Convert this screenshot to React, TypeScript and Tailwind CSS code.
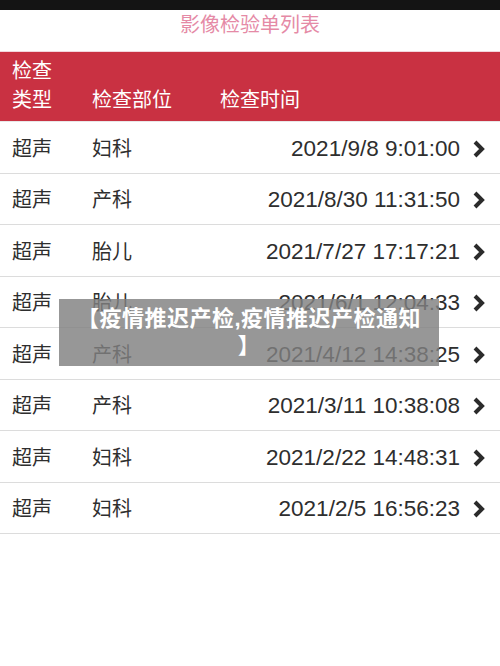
const rows = [
  { type: '超声', part: '妇科', time: '2021/9/8 9:01:00' },
  { type: '超声', part: '产科', time: '2021/8/30 11:31:50' },
  { type: '超声', part: '胎儿', time: '2021/7/27 17:17:21' },
  { type: '超声', part: '胎儿', time: '2021/6/1 12:04:33' },
  { type: '超声', part: '产科', time: '2021/4/12 14:38:25' },
  { type: '超声', part: '产科', time: '2021/3/11 10:38:08' },
  { type: '超声', part: '妇科', time: '2021/2/22 14:48:31' },
  { type: '超声', part: '妇科', time: '2021/2/5 16:56:23' },
];

function Chevron() {
  return (
    <svg width="14" height="18" viewBox="0 0 14 18" className="shrink-0">
      <polyline points="3,2 10,9 3,16" fill="none" stroke="#2b2b2b" strokeWidth="4" strokeLinejoin="miter" />
    </svg>
  );
}

export default function App() {
  return (
    <div
      className="relative w-[500px] h-[666px] bg-white overflow-hidden"
      style={{ fontFamily: '"Liberation Sans", "Noto Sans CJK SC", sans-serif' }}
    >
      <div className="h-[10px] bg-[#141414]" />
      <div className="h-[42px] flex justify-center pt-[2px] text-[20px] leading-[26px] text-[#e58aa6] border-b border-[#f2d6dd]">
        影像检验单列表
      </div>

      <div className="bg-[#c93142] h-[69px] text-white text-[20px] leading-[29px] px-3 pt-[5px]">
        <div>检查</div>
        <div className="flex">
          <span className="w-[80px]">类型</span>
          <span className="w-[128px]">检查部位</span>
          <span>检查时间</span>
        </div>
      </div>

      <div className="border-t border-[#e8e8e8]">
        {rows.map((r, i) => (
          <div key={i} className="h-[51.5px] flex items-center px-3 pt-[3px] border-b border-[#dcdcdc] text-[#2e2e2e]">
            <span className="w-[80px] text-[20px]">{r.type}</span>
            <span className="w-[80px] text-[20px]">{r.part}</span>
            <span className="flex-1 text-right text-[22.5px]">{r.time}</span>
            <span className="ml-[12px] mr-[2px]"><Chevron /></span>
          </div>
        ))}
      </div>

      <div className="absolute left-[59px] top-[299px] w-[380px] h-[67px] bg-[rgba(128,128,128,0.82)] py-[6px] text-center text-white font-bold text-[22px] leading-[27px] whitespace-nowrap tracking-[0.5px]">
        【疫情推迟产检,疫情推迟产检通知
        <br />
        】
      </div>
    </div>
  );
}
